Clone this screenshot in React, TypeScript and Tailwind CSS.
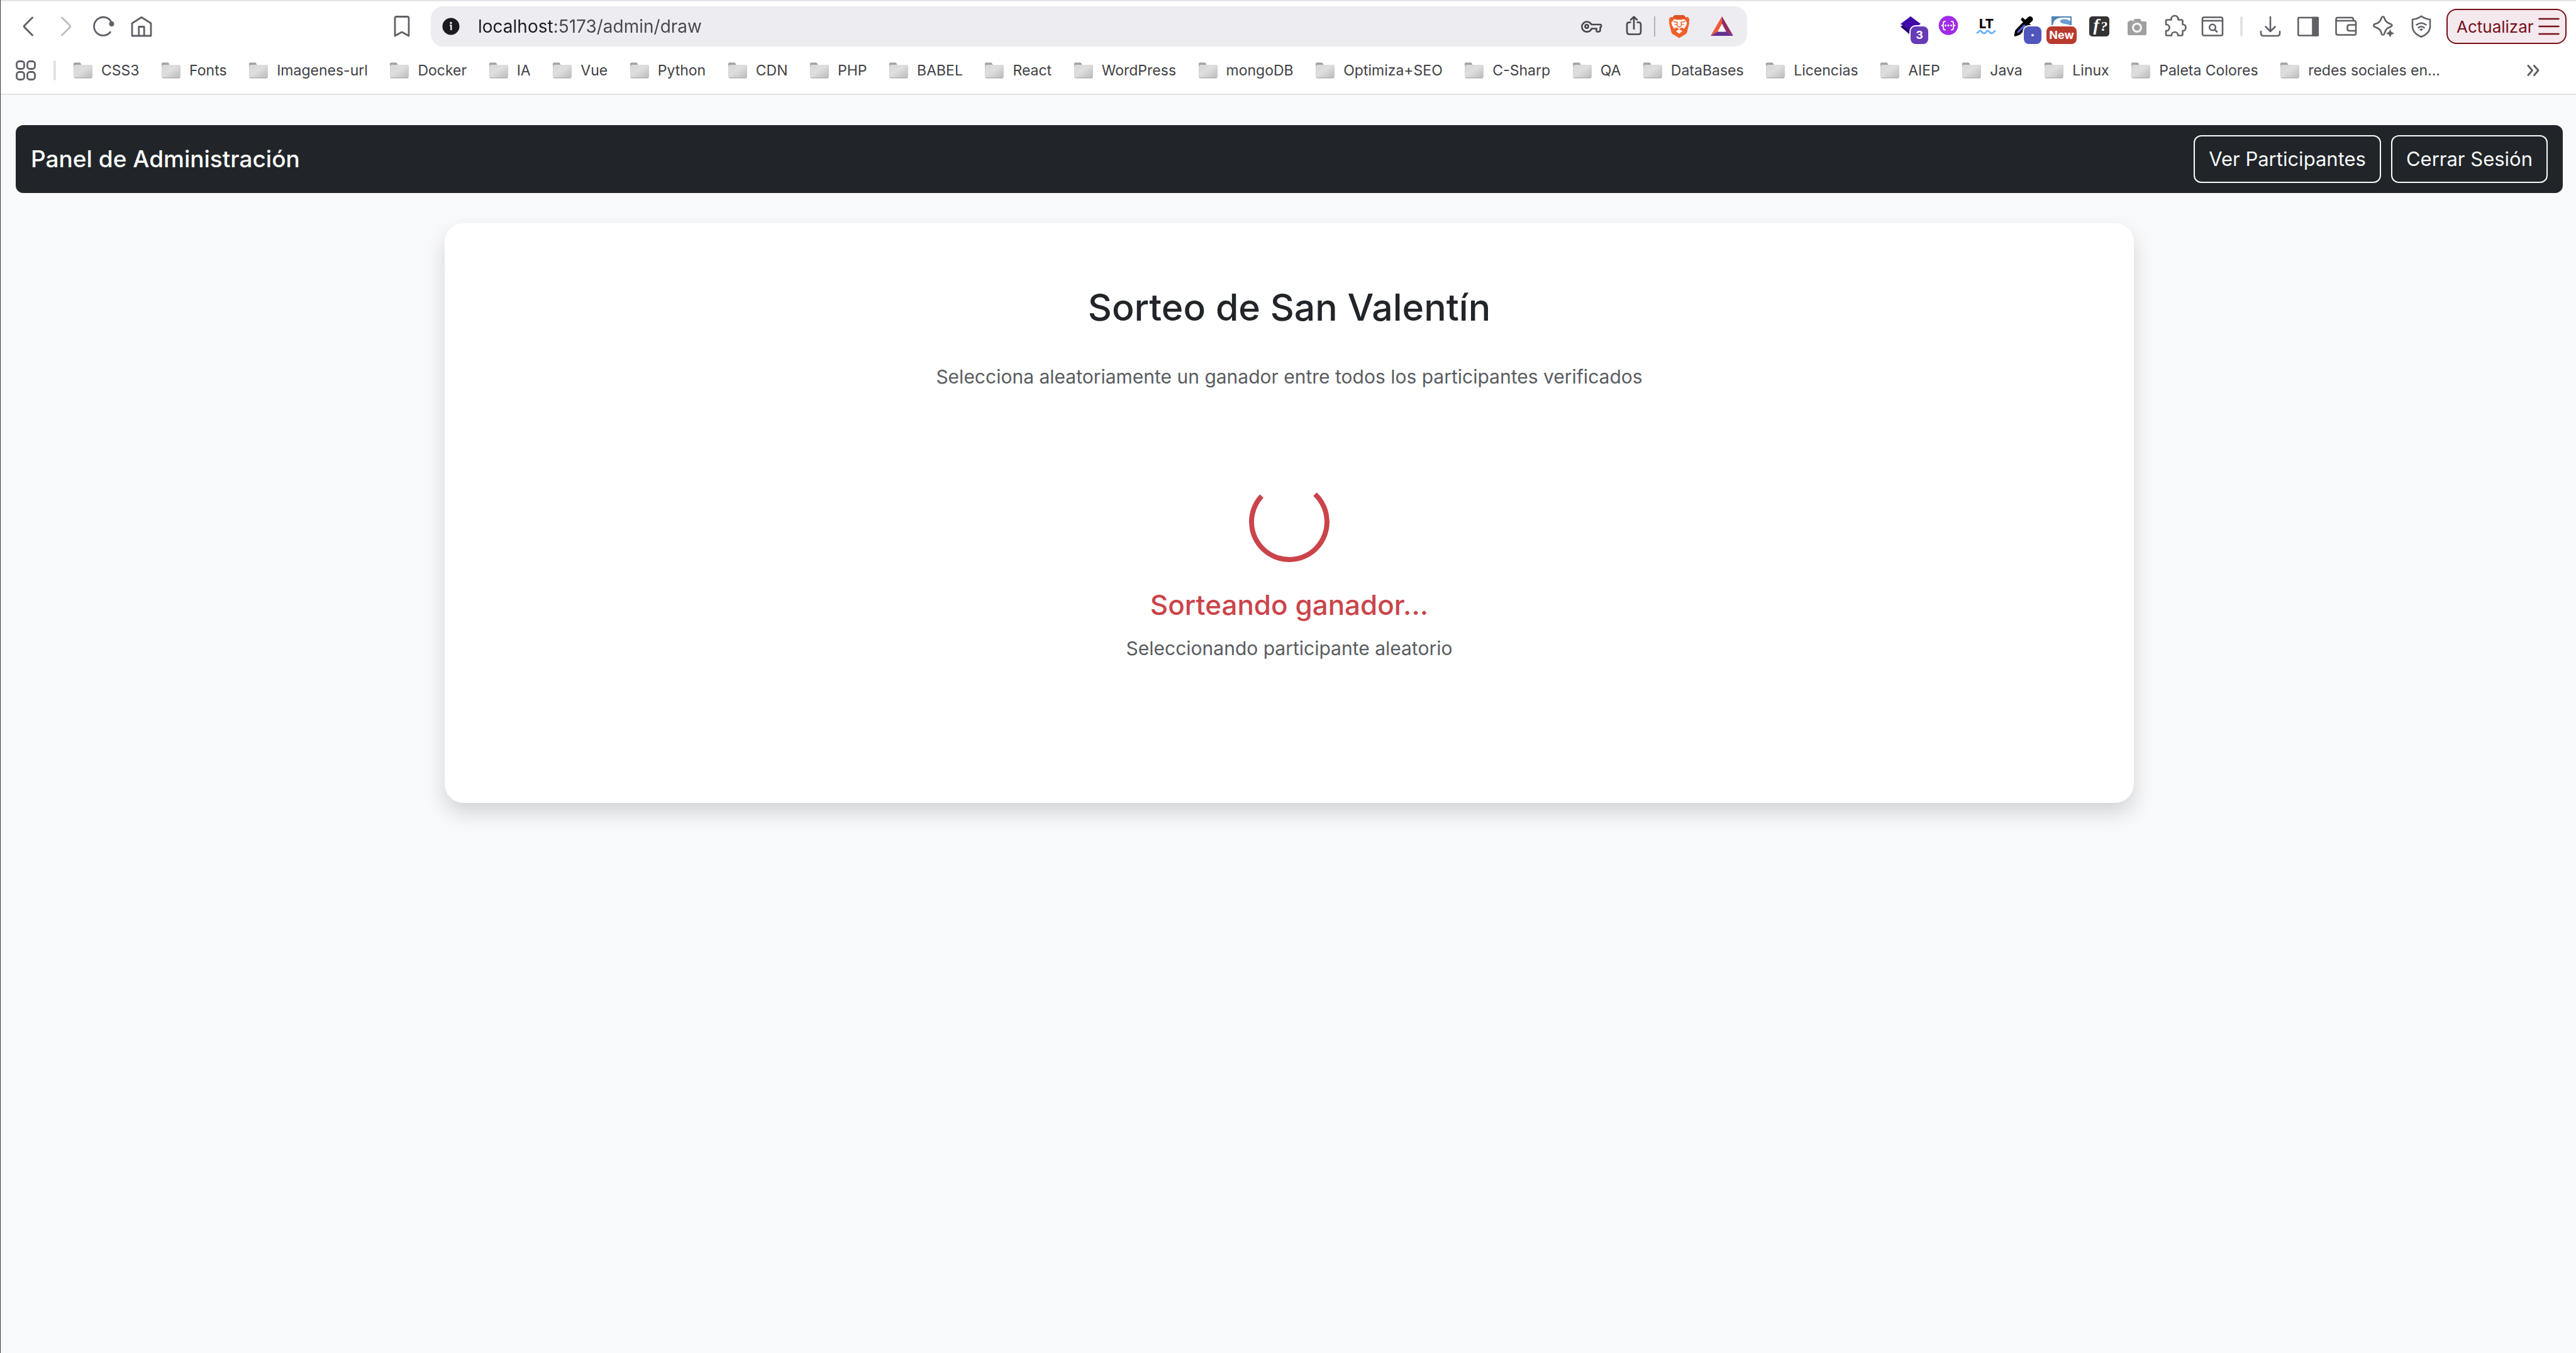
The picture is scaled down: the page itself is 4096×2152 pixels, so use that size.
import type { ReactNode } from "react";

const bookmarks = [
  "CSS3", "Fonts", "Imagenes-url", "Docker", "IA", "Vue", "Python", "CDN", "PHP", "BABEL", "React",
  "WordPress", "mongoDB", "Optimiza+SEO", "C-Sharp", "QA", "DataBases", "Licencias", "AIEP", "Java",
  "Linux", "Paleta Colores", "redes sociales en...",
];

function IconButton({ label, children, badge }: { label: string; children: ReactNode; badge?: ReactNode }) {
  return (
    <button type="button" aria-label={label} className="relative size-10 shrink-0 text-[#5f6167]">
      <svg
        viewBox="0 0 40 40"
        className="size-10 overflow-visible"
        fill="none"
        stroke="currentColor"
        strokeWidth="2.6"
        strokeLinecap="round"
        strokeLinejoin="round"
      >
        {children}
      </svg>
      {badge}
    </button>
  );
}

function Folder() {
  return (
    <svg viewBox="0 0 30 28" className="h-7 w-[30px] shrink-0">
      <defs>
        <linearGradient id="folder" x1="0" y1="0" x2="1" y2="1">
          <stop offset="0" stopColor="#d8d8d8" />
          <stop offset="0.45" stopColor="#dedede" />
          <stop offset="1" stopColor="#bcbcbe" />
        </linearGradient>
      </defs>
      <path d="M0 8V3.500Q0 1.500 2 1.500H9.500Q11 1.500 11.500 3L12.500 5H28V9Z" fill="#a3a3a3" />
      <rect x="0.500" y="5" width="29" height="21.500" rx="2.500" fill="#9d9d9f" />
      <rect x="0.500" y="5" width="29" height="20.500" rx="2.500" fill="url(#folder)" />
    </svg>
  );
}

function AddressBar() {
  return (
    <div className="flex h-16 min-w-0 flex-1 items-center rounded-[20px] bg-[#edecf1] pl-[18px] pr-5">
      <button type="button" aria-label="Información del sitio" className="size-7 shrink-0">
        <svg viewBox="0 0 28 28" className="size-7">
          <circle cx="14" cy="14" r="13.500" fill="#1c1b20" />
          <circle cx="14" cy="8.500" r="1.700" fill="#edecf1" />
          <path d="M12.200 12.500H14.300V20" fill="none" stroke="#edecf1" strokeWidth="2.400" />
        </svg>
      </button>
      <input
        aria-label="Dirección"
        defaultValue="localhost:5173/admin/draw"
        className="ml-[29px] min-w-0 flex-1 bg-[linear-gradient(to_right,#1c1b20_120px,#48474c_120px)] bg-clip-text text-[28px] leading-10 text-transparent outline-none"
      />
      <IconButton label="Contraseñas">
        <g stroke="#46464c">
          <path d="M20.500 17H34.500Q36 17 36 18.500V20Q36 21.500 34.500 21.500V25.500Q34.500 28.500 31.500 28.500H30Q28.500 28.500 28.500 27V23.500H20.800A8 8 0 1 1 20.500 17Z" />
          <circle cx="13" cy="20" r="2.600" />
        </g>
      </IconButton>
      <span className="w-7" />
      <IconButton label="Compartir">
        <g stroke="#46464c">
          <path d="M14.500 13.500H12.500Q9 13.500 9 17V28.500Q9 32.500 13 32.500H27Q31 32.500 31 28.500V17Q31 13.500 27.500 13.500H25.500" />
          <path d="M20 24V5M15 9.500 20 4.700 25 9.500" />
        </g>
      </IconButton>
      <span className="ml-3 mr-[18px] h-8 w-0.5 bg-[#b3b2b8]" />
      <IconButton label="Brave Shields">
        <g stroke="none">
          <path d="M13 2H27L30.500 5.500 34 5 36.500 9.500 35.500 13 36 15 32.500 29Q32 31 30 32.500L20 38.500 10 32.500Q8 31 7.500 29L4 15 4.500 13 3.500 9.500 6 5 9.500 5.500Z" fill="#f0602c" />
          <path d="M13 2H27L30.500 5.500 28 8H12L9.500 5.500Z" fill="#de5425" />
          <path d="M12 8.500 17 9.500H23L28 8.500 32.500 14 31 19 28 23.500 24 21.500 20 24.500 16 21.500 12 23.500 9 19 7.500 14Z" fill="#fff" />
          <path d="M20 24.500 25 27.500 20 31.500 15 27.500Z" fill="#fff" />
        </g>
        <path d="M11 12.500 16 13.200M29 12.500 24 13.200M17 13 16.500 19 20 21.500 23.500 19 23 13M13 17H15M27 17H25" stroke="#f0602c" strokeWidth="1.500" />
      </IconButton>
      <span className="w-7" />
      <IconButton label="Brave Rewards">
        <g stroke="none">
          <path d="M20 4 2 35 13.500 28 20 16Z" fill="#f05c3a" />
          <path d="M20 4 38 35 26.500 28 20 16Z" fill="#942a60" />
          <path d="M2 35 13.500 28H26.500L38 35Z" fill="#65318e" />
          <path d="M20 16 26.500 28.500H13.500Z" fill="#fff" />
        </g>
      </IconButton>
    </div>
  );
}

function Extensions() {
  return (
    <>
      <IconButton
        label="Capas"
        badge={
          <span className="absolute left-5 top-5 flex size-7 items-center justify-center rounded-lg bg-[#673ab7] text-[18px] font-bold leading-none text-white ring-2 ring-white">
            3
          </span>
        }
      >
        <g stroke="none">
          <path d="M4 20.500 9 17 30 25 20 34Z" fill="#21006b" />
          <path d="M20 4 36 16 20 27.500 4 16Z" fill="#4109a8" />
        </g>
      </IconButton>
      <IconButton label="Swagger">
        <circle cx="20" cy="18.500" r="15.300" fill="#a12be6" stroke="none" />
        <g stroke="#fff" strokeWidth="1.800">
          <path d="M15 12Q12 12 12 14.500V16.500Q12 18.500 9.500 18.500 12 18.500 12 20.500V22.500Q12 25.500 15 25.500" />
          <path d="M25 12Q28 12 28 14.500V16.500Q28 18.500 30.500 18.500 28 18.500 28 20.500V22.500Q28 25.500 25 25.500" />
        </g>
        <g fill="#fff" stroke="none">
          <circle cx="15.500" cy="18.500" r="1.500" />
          <circle cx="20" cy="18.500" r="1.500" />
          <circle cx="24.500" cy="18.500" r="1.500" />
        </g>
      </IconButton>
      <IconButton label="LanguageTool">
        <text x="20.500" y="23" textAnchor="middle" fontSize="20" fontWeight="800" fill="#000" stroke="none">LT</text>
        <path d="M6 30C8 30 8 27 10.500 27S14 31 17 31 20 27 22.500 27 26 31 29 31 32 27.500 34 27.500" stroke="#6fb4ff" strokeWidth="3" />
      </IconButton>
      <IconButton
        label="Cuentagotas"
        badge={
          <span className="absolute left-5 top-5 flex size-7 items-center justify-center rounded-lg bg-[#5156bd] ring-2 ring-white">
            <span className="size-1 rounded-full bg-white" />
          </span>
        }
      >
        <path d="M6.500 34 8 27 22 12.500 27 17.500 13 31.500Z" fill="#5560d8" stroke="#000" strokeWidth="3.600" />
        <path d="M18 9 31 21" stroke="#000" strokeWidth="5" />
        <path d="M24 14 30 8.500" stroke="#000" strokeWidth="9" />
      </IconButton>
      <IconButton
        label="Novedades"
        badge={
          <span className="absolute -left-1 top-5 flex h-7 w-12 items-center justify-center rounded-lg bg-[#b93a2c] text-[18px] font-bold leading-none text-white ring-2 ring-white">
            New
          </span>
        }
      >
        <g stroke="none">
          <rect x="4" y="4" width="32" height="20" fill="#4f82b4" />
          <path d="M6 20Q6 7 20 6H34V12Q30 8.500 24 8.500 17 9 18 12 20 15.500 27 16L34 18V20Z" fill="#fff" />
          <path d="M18 12Q17 9.500 23 9 31 8.500 34 14V18Q30 16 26 16 19 15.500 18 12Z" fill="#6a9fd4" />
        </g>
      </IconButton>
      <IconButton label="WhatFont">
        <rect x="4" y="4" width="32" height="32" rx="5" fill="#333" stroke="none" />
        <g className="font-['Liberation_Serif']" fill="#fff" stroke="none" fontStyle="italic" fontWeight="700">
          <text x="10.500" y="27" fontSize="28">f</text>
          <text x="22" y="27" fontSize="22">?</text>
        </g>
      </IconButton>
      <IconButton label="Captura">
        <g stroke="none">
          <path d="M7 12H8V10.500H13V12H14L16 8H25L27 12H33Q35 12 35 14V32Q35 34 33 34H7Q5 34 5 32V14Q5 12 7 12Z" fill="#a0a0a0" />
          <circle cx="20" cy="22" r="8" fill="#f4f4f4" />
          <circle cx="20" cy="22" r="4.800" fill="#a0a0a0" />
        </g>
      </IconButton>
      <IconButton label="Extensiones">
        <path d="M6 11Q6 9.500 7.500 9.500H14.500V8A5.500 5 0 0 1 25.500 8V9.500H30.500Q32.500 9.500 32.500 11.500V17H33A4.500 5 0 0 1 33 27H32.500V32.500Q32.500 34.500 30.500 34.500H25V33.500A5 4.500 0 0 0 15 33.500V34.500H7.500Q6 34.500 6 33V27H6.500A5 5 0 0 0 6.500 17H6Z" />
      </IconButton>
      <IconButton label="Buscar en la página">
        <rect x="4" y="5.500" width="32" height="29" rx="2.500" />
        <path d="M4 11H36" />
        <circle cx="20" cy="21.500" r="4.800" />
        <path d="M23.500 25 27 28.500" />
      </IconButton>
      <span className="mx-1 h-8 w-1 shrink-0 rounded-sm bg-[#e2e1e8]" />
      <IconButton label="Descargas">
        <path d="M20 5V27.500M12.500 20.500 20 28 27.500 20.500M5 28V31Q5 35 9 35H31Q35 35 35 31V28" />
      </IconButton>
      <IconButton label="Panel lateral">
        <rect x="4.300" y="6" width="31.500" height="28.500" rx="1.500" />
        <path d="M27.500 6H35.500V34.500H27.500Z" fill="currentColor" />
      </IconButton>
      <IconButton label="Cartera">
        <path d="M4.500 9V30.500Q4.500 33.500 7.500 33.500H33.500Q36 33.500 36 31V13.500Q36 11 33.500 11H6.500Q4.500 11 4.500 8.500 4.500 6 7 6H29Q32 6 32 9V11" />
        <path d="M36 17.500H26Q22.500 17.500 22.500 20.500V24Q22.500 27 26 27H36" />
      </IconButton>
      <IconButton label="Leo">
        <path d="M19 4.500Q20.500 4.500 21 6 23 12 26.500 14L32 16.500Q35 18.300 32 20.300L26 23Q23.500 25 22 29.500L20.800 32.500Q19 34.500 17.200 32.500L15.500 27.500Q14 24.500 11 23L5.500 20.500Q3 18.500 5.500 16.500L11 14.500Q14.500 12.500 16 8.500L17 6Q17.500 4.500 19 4.500Z" />
        <path d="M30.500 25 32.300 29 36.500 31 32.300 33 30.500 37 28.700 33 24.500 31 28.700 29Z" fill="currentColor" strokeWidth="0.600" />
      </IconButton>
      <IconButton label="VPN">
        <path d="M20 3.700Q26 8 34 9V19.500Q34 31 20 36.500 6 31 6 19.500V9Q14 8 20 3.700Z" />
        <path d="M12.500 17.500Q20 12 27.500 17.500M15.500 22Q20 18.500 24.500 22" />
        <path d="M17.500 24.500Q20 23 22.500 24.500L20 27Z" fill="currentColor" strokeWidth="0.800" />
      </IconButton>
    </>
  );
}

function Browser() {
  return (
    <header className="border-b-2 border-t-2 border-b-[#e3e3e5] border-t-[#e4e3e9] bg-white pt-2">
      <div className="flex h-16 items-center">
        <div className="flex w-[684px] shrink-0 items-center gap-5 pl-6 pr-[26px]">
          <IconButton label="Atrás">
            <path d="M26.500 6 14 18.500Q12.700 20 14 21.500L26.500 34" strokeWidth="3" />
          </IconButton>
          <IconButton label="Adelante">
            <path d="M13.500 6 26 18.500Q27.300 20 26 21.500L13.500 34" stroke="#bfbfc2" strokeWidth="3" />
          </IconButton>
          <IconButton label="Recargar">
            <path d="M30.500 29A14.600 14.600 0 1 1 32 13" strokeWidth="2.800" />
            <circle cx="32.500" cy="16" r="4" fill="currentColor" stroke="none" />
          </IconButton>
          <IconButton label="Inicio">
            <path d="M5 35V15L20 5.500 35 15V35ZM15.800 35V20.500H24.200V35" strokeWidth="2.800" />
          </IconButton>
          <span className="flex-1" />
          <IconButton label="Añadir marcador">
            <path d="M9 35V7Q9 4.500 11.500 4.500H28.500Q31 4.500 31 7V35L20 29Z" strokeWidth="2.800" />
          </IconButton>
        </div>
        <AddressBar />
        <div className="flex w-[1318px] shrink-0 items-center justify-end gap-5 pr-[15px]">
          <Extensions />
          <button
            type="button"
            className="flex h-14 w-[191px] shrink-0 items-center justify-between rounded-2xl border-2 border-[#76101b] bg-[#f4e9ed] pl-3.5 pr-[9px] text-[26px] text-[#76101b]"
          >
            Actualizar
            <svg viewBox="0 0 34 28" className="h-7 w-[34px]" stroke="currentColor" strokeWidth="2.600" strokeLinecap="round">
              <path d="M1.500 2H32.500M1.500 14H32.500M1.500 26H32.500" />
            </svg>
          </button>
        </div>
      </div>
      <nav aria-label="Marcadores" className="flex h-[75px] items-center pl-6 pr-14">
        <button type="button" aria-label="Todas las pestañas" className="size-8 text-[#5f6167]">
          <svg viewBox="0 0 32 32" className="size-8" fill="none" stroke="currentColor" strokeWidth="2.800">
            <rect x="1.500" y="1.500" width="12" height="12" rx="4" />
            <rect x="18.500" y="1.500" width="12" height="12" rx="4" />
            <rect x="1.500" y="18.500" width="12" height="12" rx="4" />
            <rect x="18.500" y="18.500" width="12" height="12" rx="4" />
          </svg>
        </button>
        <span className="ml-7 h-8 w-1 rounded-sm bg-[#e2e1e8]" />
        <ul className="ml-7 flex min-w-0 flex-1 items-center justify-between">
          {bookmarks.map((name) => (
            <li key={name}>
              <button type="button" className="flex items-center gap-3.5 whitespace-nowrap text-[23px] leading-8 text-[#3f4145]">
                <Folder />
                {name}
              </button>
            </li>
          ))}
        </ul>
        <button type="button" aria-label="Más marcadores" className="ml-[136px] text-[#5f6167]">
          <svg viewBox="0 0 24 24" className="size-6" fill="none" stroke="currentColor" strokeWidth="3" strokeLinecap="round" strokeLinejoin="round">
            <path d="M4 4.500 10.500 12 4 19.500M13.500 4.500 20 12 13.500 19.500" />
          </svg>
        </button>
      </nav>
    </header>
  );
}

export default function App() {
  return (
    <div className="min-h-screen border-l border-[#3c3c40] bg-[#f8f9fb] font-['Inter',sans-serif] text-[#212529]">
      <Browser />
      <main className="pb-12 pl-6 pr-[21px] pt-12">
        <nav className="flex items-center justify-between rounded-xl bg-[#212529] px-6 py-4">
          <span className="text-[37px] font-medium leading-[60px] text-white">Panel de Administración</span>
          <div className="flex gap-4">
            <button type="button" className="rounded-xl border-2 border-[#f8f9fa] px-[22px] py-3 text-[31px] leading-[48px] text-[#f8f9fa]">
              Ver Participantes
            </button>
            <button type="button" className="rounded-xl border-2 border-[#f8f9fa] px-[22px] py-3 text-[31px] leading-[48px] text-[#f8f9fa]">
              Cerrar Sesión
            </button>
          </div>
        </nav>
        <section className="mx-auto mt-12 flex w-[66.3%] flex-col items-center rounded-[30px] bg-white pb-[222px] pt-24 text-center shadow-[0_16px_32px_rgba(0,0,0,0.15)]">
          <h2 className="text-[59px] font-medium leading-[76px]">Sorteo de San Valentín</h2>
          <p className="mt-12 text-[30px] leading-[48px] text-[#595c5f]">
            Selecciona aleatoriamente un ganador entre todos los participantes verificados
          </p>
          <div role="status" className="mt-[143px] flex flex-col items-center">
            <div className="size-32 -rotate-2 rounded-full border-8 border-[#cb444a] border-t-transparent" />
            <h4 className="mt-10 text-[44px] font-medium leading-[57px] text-[#cb444a]">Sorteando ganador...</h4>
            <p className="mt-4 text-[30px] leading-[48px] text-[#595c5f]">Seleccionando participante aleatorio</p>
          </div>
        </section>
      </main>
    </div>
  );
}
